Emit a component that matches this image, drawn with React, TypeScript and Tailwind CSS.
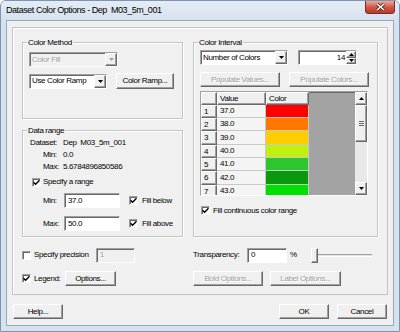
import React from 'react';

const raised =
  'bg-[#f0f0f0] border border-t-white border-l-white border-r-[#696969] border-b-[#696969] shadow-[inset_-1px_-1px_0_#a0a0a0]';
const sunken =
  'border border-t-[#a0a0a0] border-l-[#a0a0a0] border-r-white border-b-white shadow-[inset_1px_1px_0_#696969]';
const grayText = 'text-[#a0a0a0] [text-shadow:1px_1px_0_#fff]';

function Btn({ className, children, disabled }: { className: string; children: React.ReactNode; disabled?: boolean }) {
  return (
    <div className={`${raised} flex items-center justify-center leading-none shrink-0 ${disabled ? grayText : 'text-black'} ${className}`}>
      {children}
    </div>
  );
}

function Check({ checked }: { checked?: boolean }) {
  return (
    <div className={`w-[9px] h-[9px] bg-white ${sunken} flex items-center justify-center shrink-0`}>
      {checked && (
        <svg width="7" height="7" viewBox="0 0 7 7">
          <path d="M0.5 3.2 L2.6 5.3 L6.5 1.2" stroke="#000" strokeWidth="1.4" fill="none" />
        </svg>
      )}
    </div>
  );
}

function Arrow({ color = '#000', up }: { color?: string; up?: boolean }) {
  return (
    <svg width="5" height="3" viewBox="0 0 5 3">
      <path d={up ? 'M0 3h5L2.5 0z' : 'M0 0h5L2.5 3z'} fill={color} />
    </svg>
  );
}

function Combo({ text, className, disabled }: { text: string; className: string; disabled?: boolean }) {
  return (
    <div className={`${sunken} ${disabled ? 'bg-[#f0f0f0]' : 'bg-white'} h-[15px] flex items-stretch shrink-0 ${className}`}>
      <span className={`flex-1 flex items-center pl-[2px] leading-none ${disabled ? grayText : ''}`}>{text}</span>
      <div className={`${raised} w-[12px] flex items-center justify-center`}>
        <Arrow color={disabled ? '#a0a0a0' : '#000'} />
      </div>
    </div>
  );
}

function Edit({ text, className, disabled }: { text: string; className: string; disabled?: boolean }) {
  return (
    <div className={`${sunken} ${disabled ? `bg-[#f0f0f0] ${grayText}` : 'bg-white'} flex items-center pl-[3px] leading-none shrink-0 ${className}`}>
      {text}
    </div>
  );
}

function Group({ label, className, children }: { label: string; className: string; children: React.ReactNode }) {
  return (
    <div className={`relative border border-[#c4c4c4] shadow-[inset_1px_1px_0_#fff,1px_1px_0_#fff] ${className}`}>
      <span className="absolute top-[-6px] left-[4px] h-[11px] leading-[11px] px-[1px] bg-[#f0f0f0]">{label}</span>
      {children}
    </div>
  );
}

const rows = [
  { n: 1, v: '37.0', c: 'bg-[#ff0000]', h: 'h-[13px]' },
  { n: 2, v: '38.0', c: 'bg-[#ff7700]', h: 'h-[13px]' },
  { n: 3, v: '39.0', c: 'bg-[#ffcc00]', h: 'h-[14px]' },
  { n: 4, v: '40.0', c: 'bg-[#bff00f]', h: 'h-[13px]' },
  { n: 5, v: '41.0', c: 'bg-[#2ec62e]', h: 'h-[13px]' },
  { n: 6, v: '42.0', c: 'bg-[#0a990a]', h: 'h-[14px]' },
  { n: 7, v: '43.0', c: 'bg-[#00e000]', h: 'h-[13px]' },
];

export default function App() {
  return (
    <div className="w-[400px] h-[332px] bg-[#d7e2ef] border border-[#7f93b5] rounded-t-[6px] flex flex-col overflow-hidden whitespace-nowrap text-[8px] tracking-[-0.35px] text-black font-['Liberation_Sans',Arial,sans-serif]">
      {/* Title bar */}
      <div className="h-[19px] flex items-start pl-[5px] shrink-0 bg-gradient-to-b from-[#e4ebf4] to-[#d7e2ef]">
        <span className="text-[9px] tracking-[-0.45px] mt-[4px] leading-[11px]">Dataset Color Options - Dep&nbsp;&nbsp;M03_5m_001</span>
        <div className="ml-auto mr-[4px] w-[30px] h-[14px] -mt-[1px] rounded-b-[3px] border border-[#7a2b22] bg-gradient-to-b from-[#e9a99a] via-[#d0584a] to-[#b8392a] flex items-center justify-center">
          <svg width="9" height="8" viewBox="0 0 9 8">
            <path d="M1 1 L8 7 M8 1 L1 7" stroke="#5a1d16" strokeWidth="3" />
            <path d="M1 1 L8 7 M8 1 L1 7" stroke="#fff" strokeWidth="1.6" />
          </svg>
        </div>
      </div>

      {/* Client area */}
      <div className="mx-[5px] w-[388px] h-[306px] bg-[#f0f0f0] border border-[#9aa8bb] flex flex-col">
        <div className="mx-[5px] mt-[6px] w-[376px] h-[268px] border border-[#c4c4c4] shadow-[inset_1px_1px_0_#fff] pt-[14px] pl-[9px] flex flex-col">
          <div className="flex h-[195px]">
            {/* Left column */}
            <div className="w-[161px] flex flex-col">
              <Group label="Color Method" className="h-[77px] flex flex-col pl-[6px]">
                <Combo text="Color Fill" disabled className="w-[89px] mt-[9px]" />
                <div className="flex items-center h-[16px] mt-[6px]">
                  <Combo text="Use Color Ramp" className="w-[78px]" />
                  <Btn className="w-[58px] h-[16px] ml-[9px]">Color Ramp...</Btn>
                </div>
              </Group>

              <Group label="Data range" className="h-[107px] mt-[11px] flex flex-col">
                <div className="pt-[6px] pl-[7px] grid grid-cols-[33px_1fr] auto-rows-[12px] items-center leading-none">
                  <span>Dataset:</span>
                  <span>Dep&nbsp;&nbsp;M03_5m_001</span>
                  <span className="pl-[13px]">Min:</span>
                  <span>0.0</span>
                  <span className="pl-[13px]">Max:</span>
                  <span>5.6784896850586</span>
                </div>
                <div className="flex items-center h-[10px] mt-[4px] pl-[9px]">
                  <Check checked />
                  <span className="ml-[2px] leading-none">Specify a range</span>
                </div>
                <div className="flex items-center h-[15px] mt-[6px] pl-[20px]">
                  <span className="w-[21px] leading-none">Min:</span>
                  <Edit text="37.0" className="w-[56px] h-[15px]" />
                  <div className="ml-[9px]"><Check checked /></div>
                  <span className="ml-[4px] leading-none">Fill below</span>
                </div>
                <div className="flex items-center h-[15px] mt-[8px] pl-[20px]">
                  <span className="w-[21px] leading-none">Max:</span>
                  <Edit text="50.0" className="w-[56px] h-[15px]" />
                  <div className="ml-[9px]"><Check checked /></div>
                  <span className="ml-[4px] leading-none">Fill above</span>
                </div>
              </Group>
            </div>

            {/* Right column */}
            <Group label="Color Interval" className="ml-[10px] w-[185px] h-[195px] flex flex-col pl-[6px]">
              <div className="flex items-center mt-[7px]">
                <Combo text="Number of Colors" className="w-[88px]" />
                <div className={`${sunken} bg-white ml-[10px] w-[59px] h-[15px] flex items-stretch`}>
                  <span className="flex-1 flex items-center justify-end pr-[1px] leading-none">14</span>
                  <div className="w-[10px] flex flex-col">
                    <div className={`${raised} flex-1 flex items-center justify-center`}><Arrow up /></div>
                    <div className={`${raised} flex-1 flex items-center justify-center`}><Arrow /></div>
                  </div>
                </div>
              </div>
              <div className="flex mt-[7px] gap-[9px]">
                <Btn disabled className="w-[80px] h-[15px]">Populate Values...</Btn>
                <Btn disabled className="w-[80px] h-[15px]">Populate Colors...</Btn>
              </div>

              {/* Grid */}
              <div className={`${sunken} mt-[4px] w-[168px] h-[105px] flex overflow-hidden bg-[#a3a3a3]`}>
                <div className="w-[108px] flex flex-col shrink-0 leading-none">
                  <div className="flex h-[13px] shrink-0">
                    <div className={`${raised} w-[16px]`} />
                    <div className={`${raised} w-[49px] flex items-center pl-[2px]`}>Value</div>
                    <div className={`${raised} w-[43px] flex items-center pl-[2px]`}>Color</div>
                  </div>
                  {rows.map((r) => (
                    <div key={r.n} className={`flex shrink-0 ${r.h}`}>
                      <div className={`${raised} w-[16px] flex items-center pl-[2px]`}>{r.n}</div>
                      <div className="w-[49px] bg-[#f4f4f4] border-r border-b border-[#c8c8c8] flex items-center pl-[3px]">{r.v}</div>
                      <div className={`w-[43px] border-r border-b border-[#c8c8c8] ${r.c}`} />
                    </div>
                  ))}
                </div>
                <div className="flex-1" />
                <div className="w-[12px] flex flex-col bg-[#e8e8e8]">
                  <div className={`${raised} h-[13px] flex items-center justify-center shrink-0`}><Arrow up /></div>
                  <div className={`${raised} h-[37px] flex flex-col items-center justify-center gap-[1px] shrink-0`}>
                    <div className="w-[5px] h-px bg-[#696969]" />
                    <div className="w-[5px] h-px bg-[#696969]" />
                    <div className="w-[5px] h-px bg-[#696969]" />
                  </div>
                  <div className="flex-1" />
                  <div className={`${raised} h-[13px] flex items-center justify-center shrink-0`}><Arrow /></div>
                </div>
              </div>

              <div className="flex items-center h-[9px] mt-[10px] pl-[1px]">
                <Check checked />
                <span className="ml-[3px] leading-none">Fill continuous color range</span>
              </div>
            </Group>
          </div>

          {/* Precision / transparency row */}
          <div className="flex items-center h-[16px] mt-[10px]">
            <div className="w-[171px] flex items-center">
              <Check />
              <span className="ml-[3px] leading-none w-[62px]">Specify precision</span>
              <Edit text="1" disabled className="w-[39px] h-[15px]" />
            </div>
            <span className="w-[54px] leading-none">Transparency:</span>
            <Edit text="0" className="w-[40px] h-[15px]" />
            <span className="ml-[3px] w-[21px] leading-none">%</span>
            <div className="flex items-center w-[61px] h-[15px]">
              <div className={`${raised} w-[7px] h-[15px] shrink-0`} />
              <div className="flex-1 h-[3px] border-t border-t-[#a0a0a0] border-b border-b-white bg-[#e3e3e3]" />
            </div>
          </div>

          {/* Legend / options row */}
          <div className="flex items-center h-[15px] mt-[8px]">
            <div className="w-[171px] flex items-center">
              <Check checked />
              <span className="ml-[3px] leading-none w-[31px]">Legend:</span>
              <Btn className="w-[51px] h-[15px]">Options...</Btn>
            </div>
            <Btn disabled className="w-[70px] h-[15px]">Bold Options...</Btn>
            <Btn disabled className="w-[71px] h-[15px] ml-[7px]">Label Options...</Btn>
          </div>
        </div>

        {/* Footer buttons */}
        <div className="flex mt-[9px] px-[6px]">
          <Btn className="w-[50px] h-[15px]">Help...</Btn>
          <Btn className="w-[50px] h-[15px] ml-auto border-[#000] border-t-black border-l-black">OK</Btn>
          <Btn className="w-[50px] h-[15px] ml-[8px]">Cancel</Btn>
        </div>
      </div>
    </div>
  );
}
